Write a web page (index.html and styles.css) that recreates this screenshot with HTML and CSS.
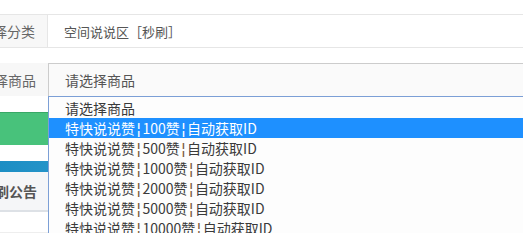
FILE: index.html
```html
<!DOCTYPE html>
<html lang="zh-CN">
<head>
  <meta charset="UTF-8" />
  <meta name="viewport" content="width=device-width, initial-scale=1.0"/>
  <title>下单</title>
  <link rel="stylesheet" href="styles.css">
</head>
<body>
  <div class="order-form">
    <div class="form-row first-row">
      <div class="row-label"><span>选择分类</span></div>
      <div class="row-value">空间说说区［秒刷］</div>
    </div>

    <div class="form-row select-row">
      <div class="row-label"><span>选择商品</span></div>
      <div class="row-select">请选择商品</div>

      <ul class="select-list">
        <li>请选择商品</li>
        <li class="active">特快说说赞<span class="sep">¦</span>100赞<span class="sep">¦</span>自动获取ID</li>
        <li>特快说说赞<span class="sep">¦</span>500赞<span class="sep">¦</span>自动获取ID</li>
        <li>特快说说赞<span class="sep">¦</span>1000赞<span class="sep">¦</span>自动获取ID</li>
        <li>特快说说赞<span class="sep">¦</span>2000赞<span class="sep">¦</span>自动获取ID</li>
        <li>特快说说赞<span class="sep">¦</span>5000赞<span class="sep">¦</span>自动获取ID</li>
        <li>特快说说赞<span class="sep">¦</span>10000赞<span class="sep">¦</span>自动获取ID</li>
      </ul>
    </div>

    <div class="buy-button"></div>

    <div class="banner-strip"></div>

    <div class="notice-panel">
      <div class="notice-title"><span>秒刷公告</span></div>
    </div>

    <div class="notice-body"></div>
  </div>
</body>
</html>
```

FILE: styles.css
```css
* {
  margin: 0;
  padding: 0;
  box-sizing: border-box;
}

body {
  font-family: "Microsoft YaHei", "Noto Sans CJK SC", sans-serif;
  background-color: #fff;
  color: #555;
  overflow: hidden;
}

.order-form {
  width: 100%;
  padding-top: 14px;
}

.form-row {
  display: flex;
  height: 34px;
}

.first-row {
  border-top: 1px solid #e6e6e6;
  border-bottom: 1px solid #e6e6e6;
}

.row-label {
  width: 48px;
  flex-shrink: 0;
  display: flex;
  justify-content: flex-end;
  align-items: center;
  overflow: hidden;
  white-space: nowrap;
  padding-right: 12px;
  background-color: #f7f7f7;
  border-right: 1px solid #e6e6e6;
  font-size: 14px;
  color: #666;
}

.row-value {
  flex: 1;
  display: flex;
  align-items: center;
  padding-left: 16px;
  font-size: 13px;
  color: #555;
}

.select-row {
  position: relative;
  margin-top: 15px;
  height: 33px;
}

.select-row .row-label {
  border-right: none;
}

.row-select {
  flex: 1;
  display: flex;
  align-items: center;
  padding-left: 16px;
  background-color: #fafafa;
  border-top: 1px solid #cccccc;
  border-left: 1px solid #cccccc;
  font-size: 14px;
  color: #555;
}

.select-list {
  position: absolute;
  top: 33px;
  left: 48px;
  width: 500px;
  height: 145px;
  overflow: hidden;
  list-style: none;
  background-color: #fdfdfd;
  border-top: 1px solid #7c9fd6;
  border-left: 1px solid #7c9fd6;
  padding-top: 1px;
  z-index: 10;
}

.select-list li {
  height: 20px;
  line-height: 20px;
  padding-left: 16px;
  font-size: 14px;
  color: #3a3a3a;
  white-space: nowrap;
}

.select-list li.active {
  background-color: #1e90ff;
  color: #fff;
}

.sep {
  font-family: "DejaVu Sans", sans-serif;
  font-size: 16px;
  line-height: 18px;
  margin: 0 1px;
  color: #7a5a3a;
}

.select-list li.active .sep {
  color: #fff;
}

.buy-button {
  margin-top: 16px;
  height: 33px;
  background-color: #48c27b;
  border-top: 1px solid #38a866;
}

.banner-strip {
  margin-top: 16px;
  height: 11px;
  background: linear-gradient(90deg, #1c8ec4, #3ea4d6 40%, #2b97cc);
}

.notice-panel {
  height: 40px;
  background-color: #f5f6f8;
  border-bottom: 2px solid #dde1e6;
}

.notice-title {
  width: 48px;
  height: 38px;
  display: flex;
  justify-content: flex-end;
  align-items: center;
  overflow: hidden;
  white-space: nowrap;
  padding-right: 11px;
  font-size: 14px;
  font-weight: bold;
  color: #555;
}

.notice-body {
  margin-top: 20px;
  border-top: 1px solid #eeeeee;
}
```
